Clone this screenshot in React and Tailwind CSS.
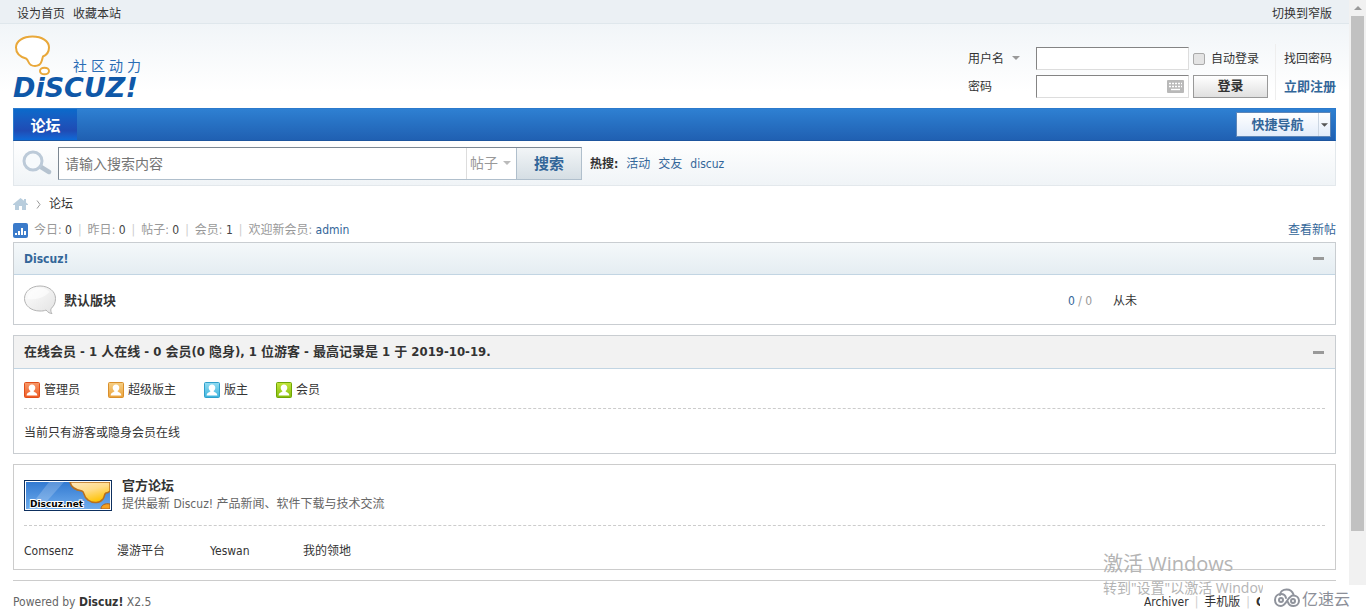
import clsx from 'clsx';

const hotWords = ['活动', '交友', 'discuz'];

const stats = [
  { label: '今日', value: '0' },
  { label: '昨日', value: '0' },
  { label: '帖子', value: '0' },
  { label: '会员', value: '1' },
];

const roles = [
  { name: '管理员', from: '#f79a6b', to: '#ef5a22', edge: '#e04e1a' },
  { name: '超级版主', from: '#f6cf85', to: '#eba23a', edge: '#d98f2c' },
  { name: '版主', from: '#93dcf2', to: '#3cb4dd', edge: '#2f9fcb' },
  { name: '会员', from: '#c3e63c', to: '#86bd0b', edge: '#6fa505' },
];

const friendLinks = ['Comsenz', '漫游平台', 'Yeswan', '我的领地'];

function Logo() {
  return (
    <div className="flex flex-col">
      <div className="flex h-[42px] items-end">
        <svg width="38" height="42" viewBox="0 0 38 42" fill="#fff" stroke="#e9a83a" strokeWidth="2" aria-hidden="true">
          <path d="M13 24.500C6 22.500 3 18.500 3 13.500 3 7 10 2.500 19.500 2.500S36 7 36 13.500c0 4.500-2.500 7.500-6 9-.5 1.500-.8 3-1.500 5-1 3-3 4.500-6.500 4.500s-5.500-1.500-6.500-4c-.7-1.800-1.300-3-2.500-3.500Z" />
          <ellipse cx="31.500" cy="37" rx="4.500" ry="3.300" />
        </svg>
        <div className="ml-[22px] flex gap-1 text-sm text-[#2a6db5]">
          <span>社</span>
          <span>区</span>
          <span>动</span>
          <span>力</span>
        </div>
      </div>
      <strong className="font-['DejaVu_Sans',sans-serif] text-[27px] leading-6 text-[#0f58a8] italic">DiSCUZ!</strong>
    </div>
  );
}

function SearchIcon() {
  return (
    <svg width="30" height="26" viewBox="0 0 30 26" aria-hidden="true">
      <path d="M19 17l8 5" stroke="#b6c3d0" strokeWidth="4.500" strokeLinecap="round" />
      <circle cx="11" cy="11" r="9" fill="#f7fafc" stroke="#bccad8" strokeWidth="3" />
    </svg>
  );
}

function Caret({ className }) {
  return (
    <svg width="8" height="4" viewBox="0 0 8 4" className={className} aria-hidden="true">
      <path d="M0 0h8L4 4Z" fill="currentColor" />
    </svg>
  );
}

function KeyboardIcon() {
  return (
    <svg width="17" height="13" viewBox="0 0 17 13" aria-hidden="true">
      <rect width="17" height="13" rx="1" fill="#b9b9b9" />
      <path d="M2 3.500h13M2 6.500h13" stroke="#fff" strokeWidth="1.400" strokeDasharray="2 1" />
      <path d="M4 9.500h9" stroke="#fff" strokeWidth="1.400" />
    </svg>
  );
}

function HomeIcon() {
  return (
    <svg width="15" height="12" viewBox="0 0 15 12" fill="#b8cddd" aria-hidden="true">
      <path d="M7.500 0L11 2.800V1h2v3.500L15 6.200V7H13v5H9V8H6v4H2V7H0V6.200Z" />
    </svg>
  );
}

function ChartIcon() {
  return (
    <svg width="15" height="15" viewBox="0 0 15 15" aria-hidden="true">
      <rect width="15" height="15" rx="2" fill="#3b7bca" />
      <path d="M2 10h2v2H2zM5 8h2v4H5zM8 5h2v7H8zM11 8h2v4h-2z" fill="#fff" />
    </svg>
  );
}

function BubbleIcon() {
  return (
    <svg width="32" height="30" viewBox="0 0 32 30" aria-hidden="true">
      <defs>
        <linearGradient id="bubble" x1="0" y1="0" x2="1" y2="1">
          <stop offset="0" stopColor="#fff" />
          <stop offset="1" stopColor="#e2e2e2" />
        </linearGradient>
      </defs>
      <path
        d="M16 1C7 1 .5 6.500.5 13.500S7 26 16 26c2 0 4 0 6-1 2 2.500 4 3.500 6 3.500-1-1-1.500-3-1-5 3-2 4.500-6 4.500-10C31.500 6.500 25 1 16 1Z"
        fill="url(#bubble)"
        stroke="#b3b3b3"
      />
      <path d="M16 3C9 3 3.500 8 3.500 14c9 1 16-1 22-7-2-2-5-4-9.500-4Z" fill="#fff" opacity="0.6" />
    </svg>
  );
}

function RoleIcon({ role, index }) {
  const id = `role-${index}`;
  return (
    <svg width="16" height="16" viewBox="0 0 16 16" aria-hidden="true">
      <defs>
        <linearGradient id={id} x1="0" y1="0" x2="0" y2="1">
          <stop offset="0" stopColor={role.from} />
          <stop offset="1" stopColor={role.to} />
        </linearGradient>
      </defs>
      <rect x="0.5" y="0.5" width="15" height="15" rx="1" fill={`url(#${id})`} stroke={role.edge} />
      <path d="M8 2.500c-2 0-3.300 1.300-3.300 3.200 0 1.500.8 2.600 1.800 3.300-.3 1.500-3.700 1.200-3.900 4.500h10.800c-.2-3.300-3.600-3-3.900-4.500 1-.7 1.800-1.800 1.800-3.300 0-1.900-1.300-3.200-3.300-3.200Z" fill="#fff" />
    </svg>
  );
}

function DiscuzBanner() {
  return (
    <svg width="88" height="31" viewBox="0 0 88 31" role="img" aria-label="Discuz.net">
      <defs>
        <linearGradient id="sky" x1="0" y1="0" x2="0" y2="1">
          <stop offset="0" stopColor="#2f77cf" />
          <stop offset="1" stopColor="#72aeee" />
        </linearGradient>
        <linearGradient id="sun" x1="0" y1="0" x2="0.5" y2="1">
          <stop offset="0" stopColor="#ffe9c0" />
          <stop offset="0.5" stopColor="#ffdc8a" />
          <stop offset="1" stopColor="#ffc409" />
        </linearGradient>
      </defs>
      <rect x="0.5" y="0.5" width="87" height="30" fill="url(#sky)" stroke="#0d2f5e" />
      <path d="M25 2h15L16 29H4Z" fill="#fff" opacity="0.2" />
      <path d="M46 2c1 5 5 8 12 9 3 1 1 6 6 9 5 4 12 3 15-1 2-3 1-5 3-6 2 0 3-1 4-2V2Z" fill="url(#sun)" stroke="#b8701e" strokeWidth="1.500" />
      <path d="M77 29c0-4 4-6 9-5v5Z" fill="#f5a020" stroke="#a85f1c" />
      <rect x="1.500" y="1.500" width="85" height="28" fill="none" stroke="#fff" />
      <text x="6" y="27" fontSize="9" fontWeight="700" fill="#000" stroke="#fff" strokeWidth="2" paintOrder="stroke" fontFamily="'DejaVu Sans', sans-serif">
        Discuz.net
      </text>
    </svg>
  );
}

function CloudIcon() {
  return (
    <svg width="26" height="20" viewBox="0 0 26 20" fill="none" stroke="#8f939c" strokeWidth="2" strokeLinecap="round" aria-hidden="true">
      <path d="M6 7C6 3.500 9 1.500 12.500 1.500c3.500 0 6 2 7 5" />
      <path d="M12 10c-.5-2.500-2.500-4-5-4-3.500 0-6 2.500-6 6s2.500 6 6 6c5.500 0 7-10.500 12-10.500 3.500 0 6 2.200 6 5.300 0 3-2.500 5.200-5.500 5.200-3 0-5-1.500-5.500-4" />
      <circle cx="7" cy="12" r="2" />
      <circle cx="19" cy="13" r="2" />
    </svg>
  );
}

function CollapseButton() {
  return (
    <button type="button" aria-label="收起" className="flex h-4 w-4 items-center justify-center">
      <span className="h-[3px] w-[11px] bg-[#999]" />
    </button>
  );
}

function Divider() {
  return <span className="text-[#ccc]">|</span>;
}

function LoginForm() {
  const field = 'h-[23px] w-[153px] border border-[#ddd] border-t-[#848484] border-l-[#848484] bg-white px-1 outline-none';
  return (
    <form className="mt-2.5 flex items-center">
      <div className="grid grid-cols-[68px_153px_75px] items-center gap-y-[5px]">
        <div className="relative flex w-[52px] items-center">
          <select aria-label="登录方式" className="w-full appearance-none bg-transparent pt-0.5 outline-none">
            <option>用户名</option>
          </select>
          <Caret className="pointer-events-none absolute right-0 text-[#999]" />
        </div>
        <input type="text" aria-label="用户名" className={field} />
        <label className="ml-1 flex items-center gap-1.5 pt-0.5 whitespace-nowrap">
          <input type="checkbox" className="h-3 w-3 appearance-none rounded-xs border border-[#aaa] bg-[#e4e4e4]" />
          自动登录
        </label>
        <label htmlFor="password" className="pt-0.5">密码</label>
        <div className="relative flex items-center">
          <input id="password" type="password" className={field} />
          <span className="absolute right-[5px]">
            <KeyboardIcon />
          </span>
        </div>
        <button type="button" className="ml-1 h-[23px] w-[75px] border border-[#999] bg-linear-to-b from-white to-[#e0e0e0] text-[13px] font-bold">
          登录
        </button>
      </div>
      <div className="ml-[11px] flex h-14 flex-col justify-between border-l border-[#eee] pt-1.5 pb-1 pl-2">
        <a href="#find">找回密码</a>
        <a href="#register" className="text-[13px] font-bold text-[#369]">立即注册</a>
      </div>
    </form>
  );
}

function SearchBar() {
  return (
    <form className="flex h-[45px] items-center border border-t-0 border-[#e3e8ec] bg-linear-to-b from-white to-[#f0f4f7] pl-2">
      <SearchIcon />
      <div className="ml-1.5 flex h-[33px] items-stretch border border-[#b0bfcc] border-t-[#7c8792] border-l-[#7c8792] bg-white">
        <input
          type="text"
          aria-label="搜索"
          placeholder="请输入搜索内容"
          className="w-[407px] px-1.5 pt-0.5 text-sm outline-none placeholder:text-[#757575]"
        />
        <div className="relative flex w-[50px] items-center border-l border-[#ddd]">
          <select aria-label="搜索范围" className="w-full appearance-none bg-transparent pl-[3px] text-sm text-[#999] outline-none">
            <option>帖子</option>
          </select>
          <Caret className="pointer-events-none absolute right-[5px] text-[#bbb]" />
        </div>
        <button type="button" className="w-[65px] border-l border-[#b0bfcc] bg-linear-to-b from-[#f2f5f7] to-[#d5dee4] pt-0.5 text-[15px] font-bold text-[#369]">
          搜索
        </button>
      </div>
      <div className="ml-2 flex gap-2 pt-0.5">
        <strong>热搜:</strong>
        {hotWords.map((word) => (
          <a key={word} href="#hot" className="text-[#369]">{word}</a>
        ))}
      </div>
    </form>
  );
}

function Panel({ title, tone, children }) {
  return (
    <section className="border border-[#c9cdd1]">
      <header
        className={clsx(
          'flex items-center justify-between border-b border-[#c2d5e3] pr-[9px] pl-2.5',
          tone === 'blue' ? 'h-8 bg-linear-to-b from-[#f4f8fa] to-[#e5edf2] text-[#369]' : 'h-[33px] bg-[#f2f2f2] text-[13px]'
        )}
      >
        <h2 className="font-bold">{title}</h2>
        <CollapseButton />
      </header>
      {children}
    </section>
  );
}

function Scrollbar() {
  return (
    <div className="flex h-[585px] w-[17px] shrink-0 flex-col items-center bg-[#f1f1f1]" aria-hidden="true">
      <div className="flex h-4 items-center">
        <Caret className="rotate-180 text-[#999]" />
      </div>
      <div className="h-[515px] w-[13px] bg-[#c1c1c1]" />
    </div>
  );
}

export default function App() {
  return (
    <div className="relative flex h-screen overflow-hidden bg-white font-['DejaVu_Sans_Condensed','Noto_Sans','Noto_Sans_CJK_SC',sans-serif] text-xs leading-[18px] text-[#333]">
      <div className="min-w-0 flex-1">
        <div className="flex h-6 items-center justify-between border-b border-[#dfe7ec] bg-[#ebf0f4] px-[17px] pt-1">
          <div className="flex gap-2">
            <a href="#home">设为首页</a>
            <a href="#favorite">收藏本站</a>
          </div>
          <a href="#narrow">切换到窄版</a>
        </div>

        <div className="bg-linear-to-b from-[#f1f5f8] to-white to-80% px-[13px]">
          <div className="flex h-[84px] items-center justify-between pt-0.5">
            <a href="#index">
              <Logo />
            </a>
            <LoginForm />
          </div>
        </div>

        <div className="px-[13px]">
          <nav className="flex h-[33px] items-center justify-between border border-[#2b7acd] border-b-[#1d559e] bg-linear-to-b from-[#2e80d2] to-[#2060b2] pr-1">
            <a href="#forum" className="flex h-full w-[63px] items-center justify-center bg-linear-to-b from-[#0a6acb] via-[#1f4bb4] via-70% to-[#0c6bd8] pt-0.5 text-[15px] font-bold text-white">
              论坛
            </a>
            <button type="button" className="flex h-[25px] w-[95px] items-center border border-[#5d86b8] bg-linear-to-b from-white to-[#e2ecfa] text-[13px] font-bold text-[#369]">
              <span className="flex-1">快捷导航</span>
              <span className="flex h-full w-3 items-center justify-center border-l border-[#ccd6e2]">
                <Caret className="w-[7px] text-[#555]" />
              </span>
            </button>
          </nav>

          <SearchBar />

          <div className="mt-[9px] flex items-center gap-2">
            <HomeIcon />
            <svg width="5" height="9" viewBox="0 0 5 9" fill="none" stroke="#999" aria-hidden="true">
              <path d="M1 .5l3 4-3 4" />
            </svg>
            <a href="#forum">论坛</a>
          </div>

          <div className="mt-2 mb-[3px] flex items-center gap-1.5 text-[#999]">
            <ChartIcon />
            {stats.map((item) => (
              <span key={item.label} className="flex gap-1.5">
                <span>
                  {item.label}: <em className="text-[#444] not-italic">{item.value}</em>
                </span>
                <Divider />
              </span>
            ))}
            <span>
              欢迎新会员: <a href="#admin" className="text-[#369]">admin</a>
            </span>
            <a href="#new" className="ml-auto text-[#369]">查看新帖</a>
          </div>

          <div className="flex flex-col gap-2.5">
            <Panel tone="blue" title={<a href="#discuz">Discuz!</a>}>
              <div className="flex h-[49px] items-center pl-2.5">
                <BubbleIcon />
                <a href="#board" className="ml-2 flex-1 pt-0.5 text-[13px] font-bold">默认版块</a>
                <p className="w-[45px] pt-0.5 text-[#999]">
                  <span className="text-[#369]">0</span> / 0
                </p>
                <p className="w-[222px] pt-0.5">从未</p>
              </div>
            </Panel>

            <Panel title="在线会员 - 1 人在线 - 0 会员(0 隐身), 1 位游客 - 最高记录是 1 于 2019-10-19.">
              <div className="px-2.5">
                <ul className="flex h-10 items-center gap-7 border-b border-dashed border-[#ccc] pt-0.5">
                  {roles.map((role, index) => (
                    <li key={role.name} className="flex items-center gap-1">
                      <RoleIcon role={role} index={index} />
                      {role.name}
                    </li>
                  ))}
                </ul>
                <p className="pt-[15px] pb-[11px]">当前只有游客或隐身会员在线</p>
              </div>
            </Panel>

            <section className="border border-[#ccc] px-2.5">
              <div className="flex h-[61px] items-center gap-2.5 border-b border-dashed border-[#ccc]">
                <a href="#discuz-net">
                  <DiscuzBanner />
                </a>
                <div>
                  <h3 className="text-[13px] font-bold">
                    <a href="#official">官方论坛</a>
                  </h3>
                  <p className="text-[#666]">提供最新 Discuz! 产品新闻、软件下载与技术交流</p>
                </div>
              </div>
              <ul className="flex pt-4 pb-[9px]">
                {friendLinks.map((name) => (
                  <li key={name} className="w-[93px]">
                    <a href="#link">{name}</a>
                  </li>
                ))}
              </ul>
            </section>
          </div>

          <footer className="mt-2.5 flex justify-between border-t border-[#ccc] pt-3 text-[#666]">
            <p>
              Powered by <strong className="text-[#333]">Discuz!</strong> X2.5
            </p>
            <p className="flex gap-1.5 pr-[76px] text-[#333]">
              <a href="#archiver">Archiver</a>
              <Divider />
              <a href="#mobile">手机版</a>
              <Divider />
              <span className="w-1 overflow-hidden font-bold">C</span>
            </p>
          </footer>
        </div>
      </div>

      <Scrollbar />

      <div className="pointer-events-none absolute right-[103px] bottom-2.5 w-40 overflow-hidden font-['Open_Sans','Noto_Sans_CJK_SC',sans-serif] whitespace-nowrap text-[#b4b4b4]">
        <p className="text-xl leading-6">激活 Windows</p>
        <p className="text-sm leading-6">转到"设置"以激活 Windows。</p>
      </div>
      <div className="absolute right-4 bottom-0 flex h-6 items-center gap-0.5 bg-white font-['Noto_Sans_CJK_SC',sans-serif] text-base text-[#8c8f98]">
        <CloudIcon />
        亿速云
      </div>
    </div>
  );
}
